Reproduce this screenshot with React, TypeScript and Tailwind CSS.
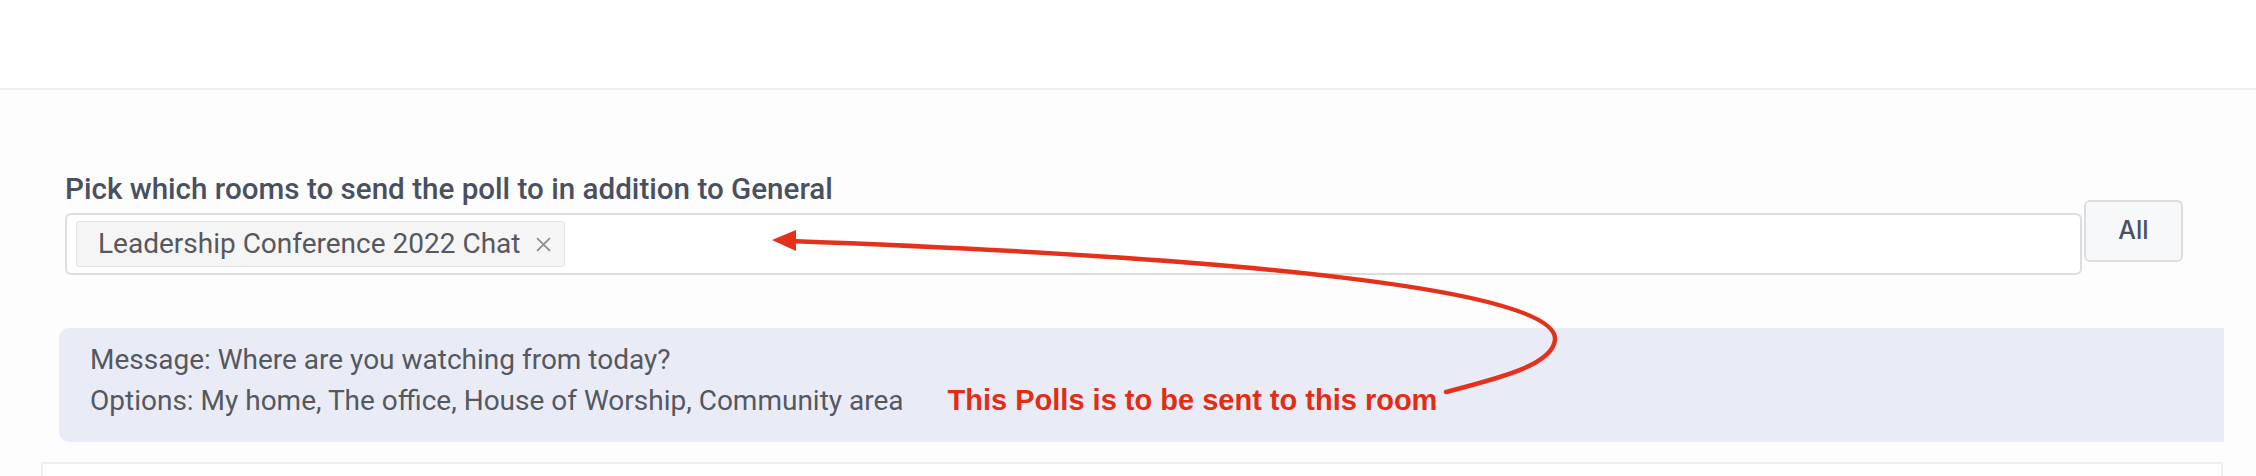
export default function App() {
  return (
    <div className="relative h-[476px] w-[2256px] overflow-hidden bg-[#fdfdfd] font-['Roboto',sans-serif]">
      {/* top bar */}
      <div className="h-[90px] border-b-2 border-[#efefef] bg-white" />

      <p className="ml-[65px] mt-[88px] text-[29.6px] leading-[22px] font-medium text-[#4b5060]">
        Pick which rooms to send the poll to in addition to General
      </p>

      <div className="flex items-start gap-[2px] pl-[65px]">
        <div className="mt-[13px] flex h-[62px] w-[2017px] items-start rounded-[6px] border-2 border-[#dddddd] bg-white pl-[9px] pt-[6px]">
          <span className="flex h-[46px] items-center gap-[16px] rounded-[3px] border border-[#e3e3e3] bg-[#f5f5f5] pl-[21px] pr-[13px] text-[28px] text-[#55585e]">
            Leadership Conference 2022 Chat
            <svg width="15" height="15" viewBox="0 0 14 14" className="mt-[1px]">
              <path d="M1 1 L13 13 M13 1 L1 13" stroke="#8a8a8a" strokeWidth="1.5" />
            </svg>
          </span>
        </div>
        <button className="flex h-[62px] w-[99px] items-center justify-center rounded-[6px] border-2 border-[#dddddd] bg-[#f7f8fa] font-['Inter',sans-serif] text-[25px] font-medium text-[#4b5060]">
          All
        </button>
      </div>

      <div className="ml-[59px] mt-[53px] h-[114px] w-[2165px] rounded-l-[10px] bg-[#e9ecf7] pl-[31px] pt-[12px] text-[28px] leading-[40px] text-[#55585e]">
        <p>Message: Where are you watching from today?</p>
        <p>
          Options: My home, The office, House of Worship, Community area
          <span className="ml-[44px] font-['Liberation_Sans',Arial,sans-serif] text-[29px] font-bold text-[#e22d14]">
            This Polls is to be sent to this room
          </span>
        </p>
      </div>

      <div className="ml-[41px] mt-[20px] h-[60px] w-[2182px] border-2 border-[#efefef] bg-white" />

      {/* annotation arrow */}
      <svg
        className="pointer-events-none absolute left-0 top-0"
        width="2256"
        height="476"
        viewBox="0 0 2256 476"
      >
        <path
          d="M790 241 C1250 258 1560 290 1555 340 C1552 365 1500 378 1446 392"
          fill="none"
          stroke="#e5311a"
          strokeWidth="4.5"
          strokeLinecap="round"
        />
        <polygon points="772,240 796,230 796,251" fill="#e5311a" />
      </svg>
    </div>
  );
}
